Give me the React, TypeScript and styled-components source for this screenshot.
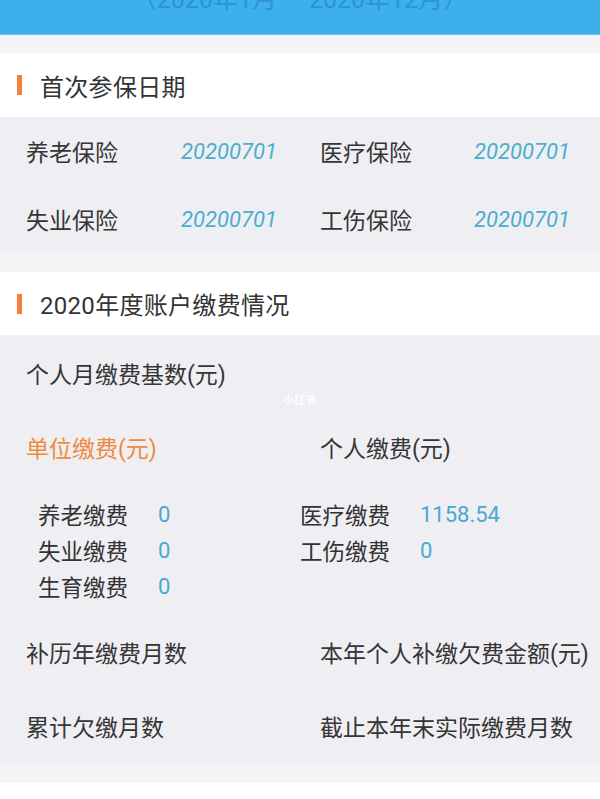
import styled, { createGlobalStyle } from "styled-components";

const Global = createGlobalStyle`
  html, body {
    margin: 0;
    padding: 0;
    background: #ffffff;
  }
  body {
    font-family: Roboto, "Noto Sans CJK SC", sans-serif;
    color: #353535;
  }
`;

const Page = styled.div`
  width: 600px;
  min-height: 799px;
  background: #ffffff;
  overflow: hidden;
`;

const TopBar = styled.div`
  height: 35px;
  background: #3cb0ea;
  border-bottom: 1px solid #6cc4ee;
  box-sizing: border-box;
  overflow: hidden;
  display: flex;
  justify-content: center;
  align-items: flex-start;
`;

const Period = styled.div`
  margin-top: -15px;
  font-size: 25px;
  line-height: 30px;
  color: #2b8ccd;
  opacity: 0.8;
`;

const Gap = styled.div<{ h: number }>`
  height: ${(p) => p.h}px;
  background: #f4f5f7;
`;

const SectionHead = styled.div<{ h: number }>`
  height: ${(p) => p.h}px;
  display: flex;
  align-items: center;
  background: #ffffff;
`;

const Bar = styled.span`
  width: 5px;
  height: 20px;
  margin-left: 17px;
  margin-right: 18px;
  background: #f0823a;
`;

const Title = styled.span`
  font-size: 24px;
  color: #333333;
  letter-spacing: 0.3px;
`;

const Body = styled.div`
  background: #efeff3;
  position: relative;
`;

const DateGrid = styled.div`
  display: grid;
  grid-template-columns: 155px 139px 154px 1fr;
  grid-auto-rows: 68px;
  align-items: center;
  padding-left: 26px;
`;

const Label = styled.span<{ accent?: boolean }>`
  font-size: 23px;
  color: ${(p) => (p.accent ? "#ef8a3d" : "#353535")};
  white-space: nowrap;
`;

const DateValue = styled.span`
  font-size: 22px;
  font-style: italic;
  color: #4aaed0;
`;

const PairRow = styled.div<{ h: number }>`
  display: grid;
  grid-template-columns: 294px 1fr;
  height: ${(p) => p.h}px;
  align-items: center;
  padding-left: 26px;
`;

const FeeGrid = styled.div`
  display: grid;
  grid-template-columns: 120px 142px 120px 1fr;
  grid-auto-rows: 36px;
  align-items: center;
  padding: 13px 0 11px 38px;
`;

const FeeLabel = styled.span`
  font-size: 22.5px;
  color: #333333;
`;

const FeeValue = styled.span`
  font-size: 22px;
  color: #4aa9cf;
`;

const Watermark = styled.span`
  position: absolute;
  left: 283px;
  top: 56px;
  font-size: 11px;
  font-weight: 700;
  color: #ffffff;
  opacity: 0.9;
`;

const dates = [
  ["养老保险", "20200701", "医疗保险", "20200701"],
  ["失业保险", "20200701", "工伤保险", "20200701"],
];

const fees = [
  ["养老缴费", "0", "医疗缴费", "1158.54"],
  ["失业缴费", "0", "工伤缴费", "0"],
  ["生育缴费", "0", "", ""],
];

export default function App() {
  return (
    <Page>
      <Global />
      <TopBar>
        <Period>（2020年1月 — 2020年12月）</Period>
      </TopBar>
      <Gap h={18} />
      <SectionHead h={64}>
        <Bar />
        <Title>首次参保日期</Title>
      </SectionHead>
      <Body>
        <DateGrid>
          {dates.map((r) => (
            <>
              <Label>{r[0]}</Label>
              <DateValue>{r[1]}</DateValue>
              <Label>{r[2]}</Label>
              <DateValue>{r[3]}</DateValue>
            </>
          ))}
        </DateGrid>
      </Body>
      <Gap h={19} />
      <SectionHead h={63}>
        <Bar />
        <Title>2020年度账户缴费情况</Title>
      </SectionHead>
      <Body>
        <Watermark>小红书</Watermark>
        <PairRow h={76}>
          <Label>个人月缴费基数(元)</Label>
        </PairRow>
        <PairRow h={72}>
          <Label accent>单位缴费(元)</Label>
          <Label>个人缴费(元)</Label>
        </PairRow>
        <FeeGrid>
          {fees.map((r) => (
            <>
              <FeeLabel>{r[0]}</FeeLabel>
              <FeeValue>{r[1]}</FeeValue>
              <FeeLabel>{r[2]}</FeeLabel>
              <FeeValue>{r[3]}</FeeValue>
            </>
          ))}
        </FeeGrid>
        <PairRow h={74}>
          <Label>补历年缴费月数</Label>
          <Label>本年个人补缴欠费金额(元)</Label>
        </PairRow>
        <PairRow h={74}>
          <Label>累计欠缴月数</Label>
          <Label>截止本年末实际缴费月数</Label>
        </PairRow>
      </Body>
      <Gap h={20} />
    </Page>
  );
}
